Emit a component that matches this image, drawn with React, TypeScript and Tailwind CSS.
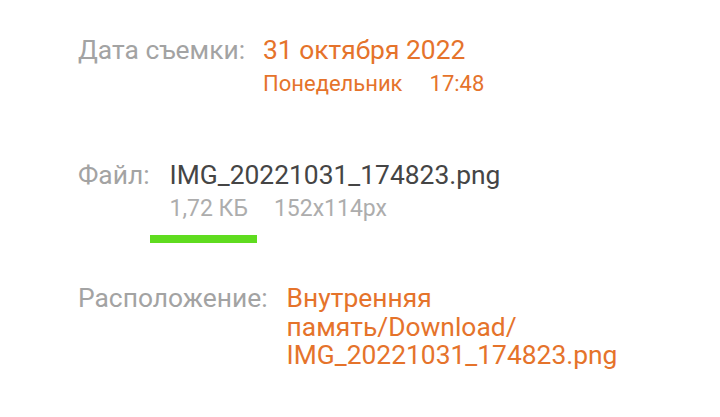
export default function App() {
  return (
    <div
      className="w-[720px] h-[417px] bg-white overflow-hidden pl-[78px] pt-[35px]"
      style={{ fontFamily: "Roboto, 'Noto Sans', sans-serif" }}
    >
      {/* Date taken */}
      <div className="flex items-start gap-[18px]">
        <div className="text-[26.4px] leading-[30px] text-[#a3a3a3]">Дата съемки:</div>
        <div className="flex flex-col">
          <div className="text-[26.4px] leading-[30px] text-[#e5732b]">31 октября 2022</div>
          <div className="mt-[6px] flex text-[22px] leading-[26px] text-[#e5732b]">
            <span>Понедельник</span>
            <span className="ml-[27px]">17:48</span>
          </div>
        </div>
      </div>

      {/* File */}
      <div className="mt-[63px] flex items-start gap-[20px]">
        <div className="text-[26.4px] leading-[30px] text-[#a3a3a3]">Файл:</div>
        <div className="flex flex-col">
          <div className="text-[26.4px] leading-[30px] text-[#454545]">IMG_20221031_174823.png</div>
          <div className="mt-[5px] flex text-[23px] leading-[27px] text-[#adadad]">
            <span>1,72 КБ</span>
            <span className="ml-[26px]">152x114px</span>
          </div>
        </div>
      </div>

      <div className="mt-[13px] ml-[72px] h-[8px] w-[107px] bg-[#5fdc1f]" />

      {/* Location */}
      <div className="mt-[41px] flex items-start gap-[19px]">
        <div className="text-[26.4px] leading-[28.5px] text-[#a3a3a3]">Расположение:</div>
        <div className="w-[360px] text-[26.4px] leading-[28.5px] text-[#e5732b]">
          Внутренняя
          <br />
          память/Download/
          <br />
          IMG_20221031_174823.png
        </div>
      </div>
    </div>
  );
}
